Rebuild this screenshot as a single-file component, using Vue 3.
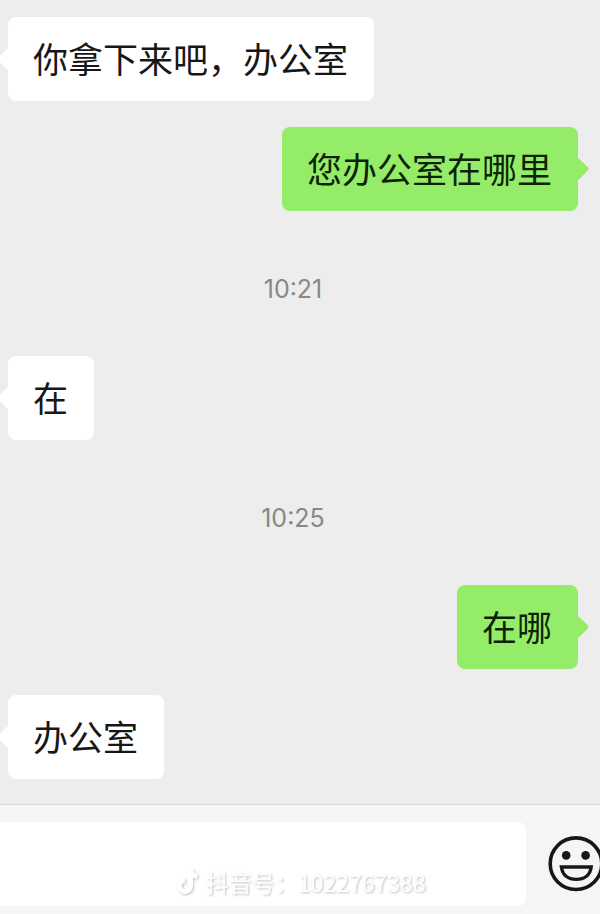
<template>
  <div class="screen">
    <main class="chat">
      <template v-for="item in items" :key="item.id">
        <time v-if="item.type === 'time'" class="stamp">{{ item.text }}</time>
        <p v-else class="bubble" :class="item.mine ? 'mine' : 'theirs'">
          {{ item.text }}
        </p>
      </template>
    </main>

    <form class="composer" @submit.prevent="send">
      <input v-model="draft" class="field" type="text" aria-label="消息" />
      <button class="emoji" type="button" aria-label="表情">
        <svg viewBox="0 0 56 56" width="56" height="56">
          <g fill="none" stroke="#171717">
            <circle cx="28" cy="27.7" r="25.8" stroke-width="3.6" />
            <path
              d="M13.4 31H43.2C42.2 39 36.4 43.4 28.3 43.4S14.4 39 13.4 31Z"
              stroke-width="3.4"
            />
          </g>
          <circle cx="18.2" cy="19.4" r="4.3" fill="#171717" />
          <circle cx="37.6" cy="19.4" r="4.3" fill="#171717" />
        </svg>
      </button>
      <div class="watermark">
        <svg viewBox="0 0 24 28" width="24" height="28">
          <path
            d="M14.500 1v17a5.600 5.600 0 1 1-5.600-5.600M14.500 1c.4 4.400 2.800 7 7 7.400"
            fill="none"
            stroke="#fff"
            stroke-width="5"
          />
        </svg>
        <span>抖音号：1022767388</span>
      </div>
    </form>
  </div>
</template>

<script setup>
import { ref } from 'vue';

const draft = ref('');

const items = ref([
  { id: 1, type: 'message', mine: false, text: '你拿下来吧，办公室' },
  { id: 2, type: 'message', mine: true, text: '您办公室在哪里' },
  { id: 3, type: 'time', text: '10:21' },
  { id: 4, type: 'message', mine: false, text: '在' },
  { id: 5, type: 'time', text: '10:25' },
  { id: 6, type: 'message', mine: true, text: '在哪' },
  { id: 7, type: 'message', mine: false, text: '办公室' },
]);

function send() {
  const text = draft.value.trim();
  if (!text) return;
  items.value.push({
    id: items.value.length + 1,
    type: 'message',
    mine: true,
    text,
  });
  draft.value = '';
}
</script>

<style>
body {
  margin: 0;
  background: #ededed;
}
</style>

<style scoped>
.screen {
  display: flex;
  flex-direction: column;
  min-height: 100vh;
  overflow: hidden;
  background: #ededed;
  font-family: 'Noto Sans CJK SC', sans-serif;
}

.chat {
  display: flex;
  flex: 1;
  flex-direction: column;
  gap: 26px;
  padding: 17px 22px 25px 8px;
}

.bubble {
  position: relative;
  margin: 0;
  padding: 23px 26px 25px 25px;
  border-radius: 8px;
  color: #171717;
  font-size: 35px;
  line-height: 36px;
}

/* speech tail */
.bubble::before {
  content: '';
  position: absolute;
  top: 34px;
  width: 16px;
  height: 16px;
  border-radius: 2px;
  background: inherit;
  transform: rotate(45deg);
}

.theirs {
  align-self: flex-start;
  background: #fff;
}

.theirs::before {
  left: -8px;
}

.mine {
  align-self: flex-end;
  background: #95ec69;
  color: #0b2406;
}

.mine::before {
  right: -8px;
}

.stamp {
  align-self: center;
  margin: 38px 0 27px;
  color: #888;
  font-family: Inter, sans-serif;
  font-size: 25px;
  line-height: 28px;
}

.composer {
  position: relative;
  display: flex;
  align-items: center;
  gap: 22px;
  padding: 17px 0 8px;
  border-top: 1px solid #dadada;
  background: #f5f5f5;
}

.field {
  flex: 1;
  min-width: 0;
  height: 84px;
  box-sizing: border-box;
  padding: 0 24px;
  border: 0;
  border-radius: 0 8px 8px 0;
  background: #fff;
  color: #171717;
  font: inherit;
  font-size: 35px;
  outline: none;
}

.emoji {
  display: flex;
  flex: none;
  width: 52px;
  padding: 0;
  border: 0;
  background: none;
  overflow: hidden;
}

.emoji svg {
  flex: none;
}

.watermark {
  position: absolute;
  bottom: 16px;
  left: 176px;
  display: flex;
  align-items: center;
  gap: 6px;
  color: #fff;
  font-size: 23px;
  line-height: 32px;
  filter: drop-shadow(1px 1px 1px rgba(0, 0, 0, 0.25));
  pointer-events: none;
}
</style>
